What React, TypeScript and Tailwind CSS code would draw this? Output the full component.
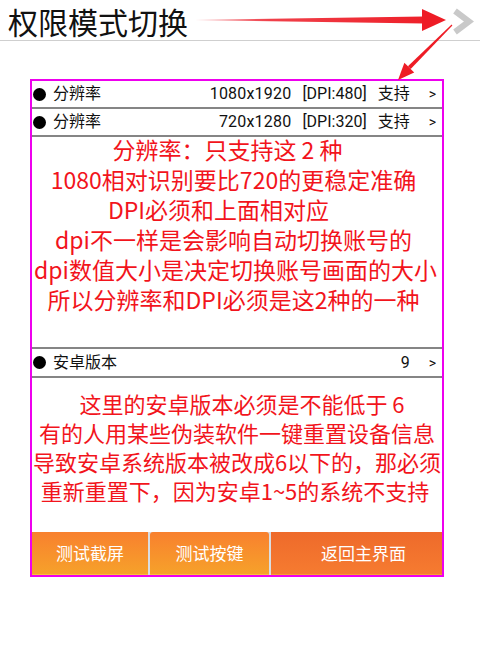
import React from "react";

const cjk = "font-['Noto_Sans_CJK_SC','Noto_Sans',sans-serif]";
const row = "'Roboto','Noto Sans CJK SC',sans-serif";

function Bullet() {
  return <span className="ml-[1px] w-[13px] h-[13px] rounded-full bg-black shrink-0" />;
}

function ResRow({ res, dpi }: { res: string; dpi: string }) {
  return (
    <div
      className="h-[28px] border-b-2 border-[#858585] flex items-center text-[16px] text-[#111] leading-[20px]"
      style={{ fontFamily: row }}
    >
      <Bullet />
      <span className="ml-[7px]">分辨率</span>
      <span className="flex-1" />
      <span className="tracking-[0.2px]">{res}</span>
      <span className="ml-[11px]">{dpi}</span>
      <span className="ml-[11px]">支持</span>
      <span className="ml-[19px] mr-[6px] text-[14px]">&gt;</span>
    </div>
  );
}

export default function App() {
  return (
    <div className={`relative w-[480px] h-[655px] bg-white overflow-hidden ${cjk}`}>
      {/* header */}
      <div className="h-[41px] border-b border-[#cfcfcf] flex items-start pt-[2px] pl-[8px]">
        <span className="text-[30px] leading-[38px] text-[#111]">权限模式切换</span>
      </div>

      {/* box */}
      <div className="ml-[30px] mt-[38px] w-[414px] h-[498px] border-2 border-[#ee00ee] flex flex-col">
        <ResRow res="1080x1920" dpi="[DPI:480]" />
        <ResRow res="720x1280" dpi="[DPI:320]" />

        <div className="h-[212px] border-b-2 border-[#858585] flex flex-col items-center pr-[7px] text-[23px] leading-[30px] text-[#f2141c] whitespace-nowrap">
          <div className="-mt-[3px] pr-[12px]">分辨率：只支持这 2 种</div>
          <div>1080相对识别要比720的更稳定准确</div>
          <div className="pr-[30px]">DPI必须和上面相对应</div>
          <div>dpi不一样是会影响自动切换账号的</div>
          <div className="pl-[4px]">dpi数值大小是决定切换账号画面的大小</div>
          <div>所以分辨率和DPI必须是这2种的一种</div>
        </div>

        <div
          className="h-[29px] border-b-2 border-[#858585] flex items-center text-[16px] text-[#111] leading-[20px]"
          style={{ fontFamily: row }}
        >
          <Bullet />
          <span className="ml-[7px]">安卓版本</span>
          <span className="flex-1" />
          <span>9</span>
          <span className="ml-[19px] mr-[6px] text-[14px]">&gt;</span>
        </div>

        <div className="h-[154px] pt-[11px] flex flex-col items-center text-[22px] leading-[29px] text-[#f2141c] whitespace-nowrap">
          <div className="pl-[10px]">这里的安卓版本必须是不能低于 6</div>
          <div>有的人用某些伪装软件一键重置设备信息</div>
          <div>导致安卓系统版本被改成6以下的，那必须</div>
          <div className="pr-[4px]">重新重置下，因为安卓1~5的系统不支持</div>
        </div>

        <div className="h-[43px] flex gap-[2px] bg-[#d9dde2] text-white text-[17px]">
          <div className="w-[116px] flex items-center justify-center bg-gradient-to-b from-[#f8802e] to-[#f6a12a] border-b border-[#f7c03a]">
            测试截屏
          </div>
          <div className="w-[119px] flex items-center justify-center rounded-t-[3px] bg-gradient-to-b from-[#f8802e] to-[#f6a12a] border-b border-[#f7c03a]">
            测试按键
          </div>
          <div className="flex-1 flex items-center justify-center pl-[14px] bg-gradient-to-b from-[#ee6a2b] to-[#f67b30] border-b border-[#f5a030]">
            返回主界面
          </div>
        </div>
      </div>

      {/* annotation arrows */}
      <svg
        className="absolute left-[192px] top-0 pointer-events-none"
        width="288"
        height="84"
        viewBox="192 0 288 84"
      >
        <defs>
          <linearGradient id="ag" x1="195" y1="0" x2="445" y2="0" gradientUnits="userSpaceOnUse">
            <stop offset="0" stopColor="#f7a3a8" />
            <stop offset="0.3" stopColor="#f0404a" />
            <stop offset="1" stopColor="#ee1c25" />
          </linearGradient>
        </defs>
        <polygon points="195,20 424,16.5 424,23.5" fill="url(#ag)" />
        <polygon points="422,9 446,20 422,31" fill="#ee1c25" />
        <polygon points="452.4,25.4 451.6,24.6 407.9,66.3 410.7,69.1" fill="#ee1c25" />
        <polygon points="398,80 414.2,72.6 404.4,62.8" fill="#ee1c25" />
        <polyline points="455,11 469,21.5 455,32" fill="none" stroke="#c9c9c9" strokeWidth="6" />
      </svg>
    </div>
  );
}
